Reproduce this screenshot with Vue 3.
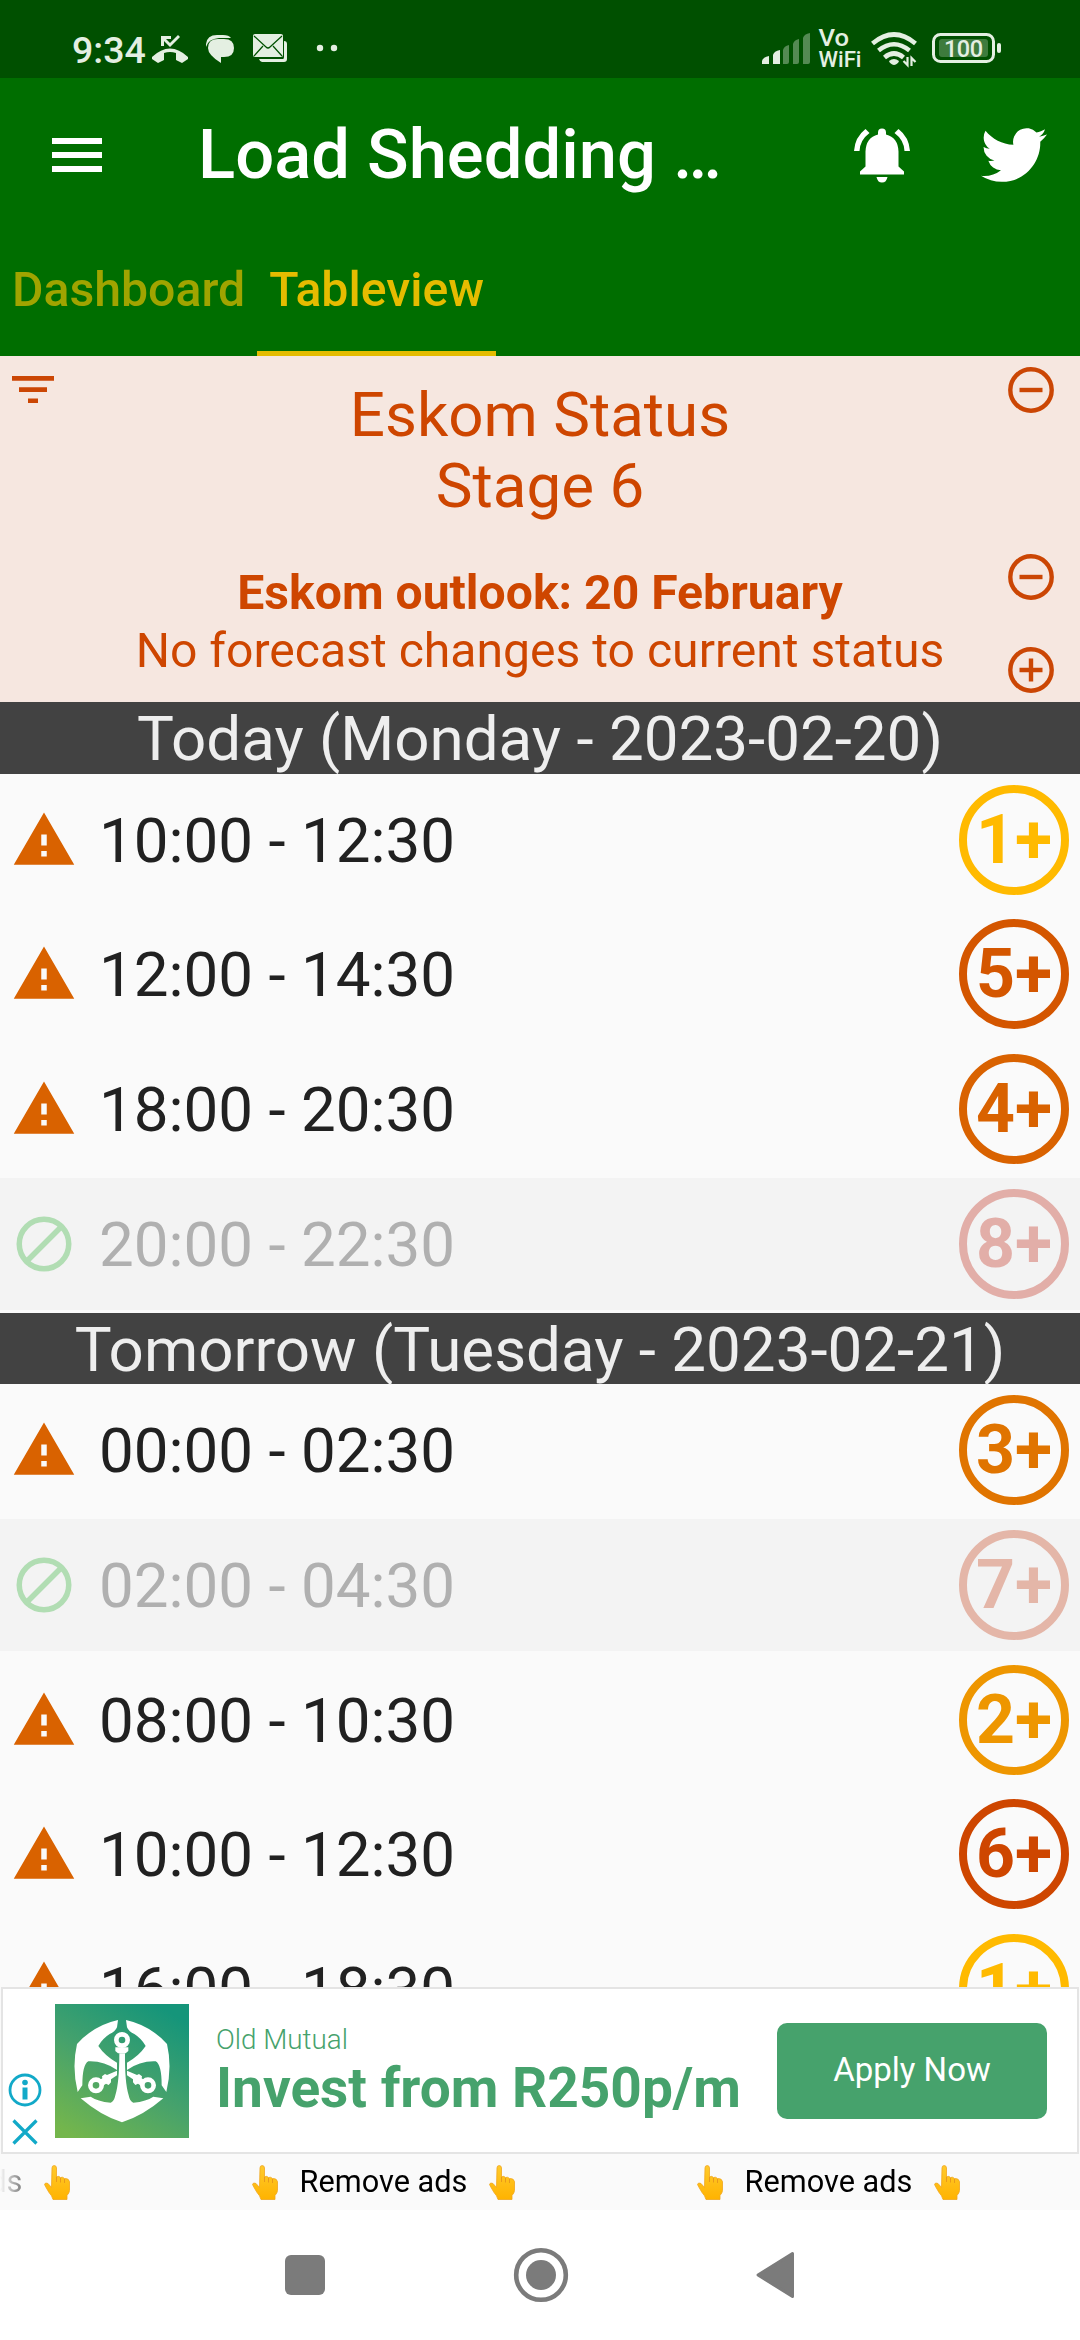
<template>
  <div class="screen">
    <div class="statusbar">
      <span class="clock">9:34</span>
      <svg class="status-left" width="190" height="40" viewBox="150 28 190 40" fill="#e4efe2">
        <path d="M152 57q18-17 36 0v2l-6 4-6-3v-7q-6-2-12 0v7l-6 3-6-4z" />
        <path d="M161 36h10v3h-5l4 4 8-8 2 2-10 10-6-6v5h-3z" />
        <path d="M206 47v-3q1-9 11-9h6q6 0 8 3h-12q-11 1-13 9z" />
        <path d="M218 39h6q10 0 10 9t-10 9h-3v6q-13-8-13-15 0-9 10-9z" />
        <path d="M255 34h26q2 0 2 2v19q0 2-2 2h-26q-2 0-2-2v-19q0-2 2-2z" />
        <path d="M284 41q3 0 3 3v15q0 3-3 3h-22q-2 0-3-3h24q1 0 1-2z" />
        <path d="M254 36l12 11q2 2 4 0l12-11M254 56l9-10M282 56l-9-10" fill="none" stroke="#005000" stroke-width="1.2" />
        <circle cx="320" cy="48" r="3.2" />
        <circle cx="334" cy="48" r="3.2" />
      </svg>
      <span class="spacer"></span>
      <svg class="status-right" width="250" height="50" viewBox="760 23 250 50" fill="#e4efe2">
        <path d="M762 64v-3q1-4 7-5v8zM773 64v-9q1-4 7-5v14z" />
        <path d="M783 64v-14q1-4 6-5v17q0 2-2 2zM793 64v-20q1-4 6-5v23q0 2-2 2zM803 64v-26q1-4 7-5v29q0 2-2 2z" opacity=".37" />
        <text x="818.500" y="46" font-size="23.500" font-weight="500" textLength="30.500" lengthAdjust="spacingAndGlyphs">Vo</text>
        <text x="818.500" y="67" font-size="22" font-weight="500" textLength="43" lengthAdjust="spacingAndGlyphs">WiFi</text>
        <g fill="none" stroke="#e4efe2" stroke-width="4.600">
          <path d="M872.500 43.500q21.500-18 43 0" />
          <path d="M878.500 50.500q15.500-12.500 31 0" />
          <path d="M884.500 57.500q9.500-8 19 0" />
        </g>
        <path d="M889 61q5-4 10 0-1 3-5 4-4-1-5-4z" />
        <path d="M907.500 57v8l-4-4M911.500 66v-8l4 4" fill="none" stroke="#e4efe2" stroke-width="2.200" />
        <rect x="933.500" y="34.500" width="60" height="27" rx="7" fill="none" stroke="#e4efe2" stroke-width="3" />
        <rect x="939" y="39" width="49" height="18" rx="3" opacity=".27" />
        <rect x="997" y="43" width="4" height="10" rx="2" />
        <text x="944" y="57" font-size="23.500" font-weight="500" textLength="39">100</text>
      </svg>
    </div>

    <header class="appbar">
      <svg class="menu" width="50" height="34" viewBox="0 0 50 34" fill="#fff">
        <path d="M0 0h50v6H0zM0 14h50v6H0zM0 28h50v6H0z" />
      </svg>
      <h1>Load Shedding …</h1>
      <svg class="bell" width="56" height="55" viewBox="0 0 56 55" fill="#fff">
        <path d="M28 0.500q4 0 4 4v2q12 3 12.500 17v15l5.500 5v3H6v-3l5.500-5v-15q0.500-14 12.500-17v-2q0-4 4-4z" />
        <path d="M22.500 49h11q-1 5.500-5.500 5.500t-5.500-5.500z" />
        <path d="M11.500 1l4 4Q6 12 5.500 23H0Q1 9 11.500 1zM44.500 1l-4 4Q50 12 50.500 23H56Q55 9 44.500 1z" />
      </svg>
      <svg class="bird" width="66" height="66" viewBox="0 0 24 24" fill="#fff">
        <path d="M23.953 4.570a10 10 0 01-2.825.775 4.958 4.958 0 002.163-2.723c-.951.555-2.005.959-3.127 1.184a4.920 4.920 0 00-8.384 4.482C7.690 8.095 4.067 6.130 1.640 3.162a4.822 4.822 0 00-.666 2.475c0 1.710.870 3.213 2.188 4.096a4.904 4.904 0 01-2.228-.616v.060a4.923 4.923 0 003.946 4.827 4.996 4.996 0 01-2.212.085 4.936 4.936 0 004.604 3.417 9.867 9.867 0 01-6.102 2.105c-.390 0-.779-.023-1.170-.067a13.995 13.995 0 007.557 2.209c9.053 0 13.998-7.496 13.998-13.985 0-.210 0-.420-.015-.630A9.935 9.935 0 0024 4.590z" />
      </svg>
    </header>

    <nav class="tabs">
      <span class="tab">Dashboard</span>
      <span class="tab active">Tableview</span>
    </nav>

    <section class="status">
      <svg class="filter" width="42" height="27" viewBox="0 0 42 27" fill="#cb4604">
        <path d="M0 0h42v4.700H0zM7 11.200h28v4.700H7zM16 22.400h10v4.700H16z" />
      </svg>
      <div class="status-text">
        <p class="stage">Eskom Status<br>Stage 6</p>
        <p class="outlook"><b>Eskom outlook: 20 February</b><br><span>No forecast changes to current status</span></p>
      </div>
      <div class="zoomers">
        <svg v-for="(plus, i) in [false, false, true]" :key="i" width="46" height="46" viewBox="0 0 46 46" fill="none" stroke="#cb4604" stroke-width="4.400">
          <circle cx="23" cy="23" r="20.700" />
          <path :d="plus ? 'M11.500 23h23M23 11.500v23' : 'M11.500 23h23'" />
        </svg>
      </div>
    </section>

    <main class="list">
      <template v-for="day in days" :key="day.title">
        <h2><span>{{ day.title }}</span></h2>
        <div v-for="slot in day.slots" :key="slot.time" class="row" :class="{ off: slot.off }">
          <svg v-if="slot.off" class="icon" viewBox="0 0 24 24" fill="none" stroke="#b1ddb3" stroke-width="2">
            <circle cx="12" cy="12" r="9" />
            <path d="M5 19L19 5" />
          </svg>
          <svg v-else class="icon" viewBox="0 0 24 24" fill="#d96200">
            <path d="M1 21h22L12 2 1 21zm12-3h-2v-2h2v2zm0-4h-2v-4h2v4z" />
          </svg>
          <span class="time"><span>{{ slot.time }}</span></span>
          <span class="badge" :class="'s' + slot.stage">{{ slot.stage }}+</span>
        </div>
      </template>
    </main>

    <aside class="ad">
      <div class="choices">
        <svg width="34" height="34" viewBox="0 0 34 34" fill="#12a9c8">
          <circle cx="17" cy="17" r="15" fill="none" stroke="#12a9c8" stroke-width="2.800" />
          <circle cx="17" cy="9.500" r="2.800" />
          <path d="M14.500 14.500h5v12h-5z" />
        </svg>
        <svg width="26" height="26" viewBox="0 0 26 26" stroke="#12a9c8" stroke-width="3.200">
          <path d="M1.500 1.500l23 23M24.500 1.500l-23 23" />
        </svg>
      </div>
      <svg class="logo" width="134" height="134" viewBox="0 0 402 402">
        <defs>
          <linearGradient id="lg" x1="0.150" y1="1" x2="0.750" y2="0">
            <stop offset="0" stop-color="#74b64c" />
            <stop offset=".5" stop-color="#46a26c" />
            <stop offset="1" stop-color="#15957a" />
          </linearGradient>
        </defs>
        <rect width="402" height="402" fill="url(#lg)" />
        <g fill="#fff">
          <path d="M189 48l-3 22q-6 14-22 20-22 14-34 36 20 30 56 50v22q-40-28-86-26-18 10-18 72l-14 20Q50 190 66 120q50-56 123-72z" />
          <path d="M213 48l3 22q6 14 22 20 22 14 34 36-20 30-56 50v22q40-28 86-26 18 10 18 72l14 20q18-74 2-144-50-56-123-72z" />
          <path d="M193 148h17q-1 88 11 126 4 20 14 22 40-4 60-18l30 5q-60 52-124 72-64-20-124-72l30-5q20 14 60 18 10-2 14-22 12-38 12-126z" />
          <path d="M181 130h39v11l-8 7h-23l-8-7z" />
          <path d="M186 200l-30 13-6-3-9 7 1 6-10 7 12 15 9-6 8 4 7-8v-9l18-12zM216 200l30 13 6-3 9 7-1 6 10 7-12 15-9-6-8 4-7-8v-9l-18-12z" />
        </g>
        <g fill="none" stroke="#fff" stroke-width="14">
          <circle cx="201" cy="108" r="17" />
          <circle cx="123" cy="244" r="17" />
          <circle cx="279" cy="244" r="17" />
        </g>
      </svg>
      <div class="ad-text">
        <span class="brand"><span>Old Mutual</span></span>
        <strong><span>Invest from R250p/m</span></strong>
      </div>
      <button class="apply">Apply Now</button>
    </aside>

    <div class="marquee">
      <div v-for="n in 3" :key="n" class="remove">
        <svg v-for="side in 2" :key="side" :class="'hand' + side" width="26" height="35" viewBox="0 0 26 35">
          <path d="M8 3q0-2.500 2.200-2.500T12.500 3v9q2-1.500 4 .5 2-1 4 1 4-.5 5 3v9q0 2-2.500 5v4H9q-1-4-4-7-3-5-4.500-8 .5-2.500 3.500-1l3.500 4z" fill="url(#hand)" stroke="#f0a61c" stroke-width=".8" />
          <path d="M12.500 12v5M16.500 13v4.500M20.500 14v4" fill="none" stroke="#e9991a" stroke-width="1" />
        </svg>
        <span>Remove ads</span>
      </div>
      <svg width="0" height="0">
        <linearGradient id="hand" x1="0" y1="0" x2="0" y2="1">
          <stop offset="0" stop-color="#ffca2c" />
          <stop offset="1" stop-color="#ffb300" />
        </linearGradient>
      </svg>
    </div>

    <footer class="navbar">
      <svg width="512" height="56" viewBox="283 2247 512 56" fill="#7b7b7b">
        <rect x="284" y="2255" width="40" height="40" rx="6" />
        <circle cx="540" cy="2275" r="24.800" fill="none" stroke="#7b7b7b" stroke-width="4.600" />
        <circle cx="540" cy="2275" r="15" />
        <path d="M757 2275L791.500 2253.500v43z" stroke="#7b7b7b" stroke-width="3" stroke-linejoin="round" />
      </svg>
    </footer>
  </div>
</template>

<script setup>
const days = [
  {
    title: 'Today (Monday - 2023-02-20)',
    slots: [
      { time: '10:00 - 12:30', stage: 1 },
      { time: '12:00 - 14:30', stage: 5 },
      { time: '18:00 - 20:30', stage: 4 },
      { time: '20:00 - 22:30', stage: 8, off: true },
    ],
  },
  {
    title: 'Tomorrow (Tuesday - 2023-02-21)',
    slots: [
      { time: '00:00 - 02:30', stage: 3 },
      { time: '02:00 - 04:30', stage: 7, off: true },
      { time: '08:00 - 10:30', stage: 2 },
      { time: '10:00 - 12:30', stage: 6 },
      { time: '16:00 - 18:30', stage: 1 },
    ],
  },
]
</script>

<style>
body {
  margin: 0;
  background: #fff;
}
</style>

<style scoped>
.screen {
  width: 1080px;
  height: 2340px;
  display: flex;
  flex-direction: column;
  overflow: hidden;
  background: #fafafa;
  font-family: Roboto, sans-serif;
  white-space: nowrap;
}

h1,
h2,
p {
  margin: 0;
  font-weight: 400;
}

svg {
  display: block;
  flex: none;
}

.statusbar {
  flex: none;
  height: 78px;
  box-sizing: border-box;
  padding: 18px 70px 0 72px;
  display: flex;
  align-items: center;
  background: #005000;
  color: #e4efe2;
}

.clock {
  width: 78px;
  padding-top: 4px;
  font-size: 37.500px;
  font-weight: 500;
  line-height: 40px;
}

.spacer {
  flex: 1;
}

.appbar {
  flex: none;
  height: 154px;
  box-sizing: border-box;
  padding: 0 33px 0 52px;
  display: flex;
  align-items: center;
  background: #006e00;
  color: #fff;
}

h1 {
  flex: 1;
  margin: -1px 0 0 96px;
  font-size: 68.750px;
  font-weight: 500;
}

.bell {
  margin-right: 71px;
}

.tabs {
  flex: none;
  height: 123.500px;
  display: flex;
  background: #006e00;
}

.tab {
  box-sizing: border-box;
  height: 123.500px;
  padding: 0 12px;
  border-bottom: 5px solid transparent;
  font-size: 48.200px;
  font-weight: 500;
  line-height: 115px;
  color: #a0a400;
}

.tab.active {
  border-color: #e5bc00;
  color: #e5bc00;
}

.status {
  flex: none;
  height: 346.500px;
  box-sizing: border-box;
  display: flex;
  justify-content: space-between;
  padding: 11px 26px 0 12px;
  background: #f6e7e0;
  color: #ce4600;
  text-align: center;
}

.filter {
  margin: 9px 18px 0 0;
}

.stage {
  padding-top: 13px;
  font-size: 61.900px;
  line-height: 71px;
}

.outlook {
  padding-top: 42px;
  font-size: 48.100px;
  line-height: 58px;
}

.zoomers svg:nth-child(2) {
  margin: 141px 0 47px;
}

.list {
  flex: none;
  height: 1285px;
  overflow: hidden;
}

h2 {
  height: 71.500px;
  background: #424242;
  color: #eee;
  font-size: 61.900px;
  line-height: 74px;
  text-align: center;
}

.row {
  height: 132px;
  margin-bottom: 2.750px;
  box-sizing: border-box;
  padding: 0 11px;
  display: flex;
  align-items: center;
  color: #212121;
}

.row.off {
  background: #f3f3f3;
  color: #b0b0b0;
}

.icon {
  width: 66px;
  height: 66px;
}

.time {
  flex: 1;
  margin-left: 22px;
  padding-top: 2px;
  font-size: 61.900px;
}

.badge {
  width: 110px;
  height: 110px;
  box-sizing: border-box;
  border: 8px solid;
  border-radius: 50%;
  font-size: 68px;
  font-weight: 700;
  line-height: 94px;
  text-align: center;
}

.s1 { color: #ffba00; }
.s2 { color: #ee9600; }
.s3 { color: #e07400; }
.s4 { color: #d96200; }
.s5 { color: #d45600; }
.s6 { color: #ce4600; }
.s7 { color: #e4b6a8; }
.s8 { color: #e2aea8; }

.ad {
  flex: none;
  height: 167px;
  box-sizing: border-box;
  margin: 0 1px;
  padding-right: 30px;
  display: flex;
  align-items: center;
  border: 2px solid #e4e4e4;
  background: #fff;
  color: #46a26c;
}

.choices {
  width: 52px;
  display: flex;
  flex-direction: column;
  gap: 12px;
  padding: 76px 0 0 5px;
  box-sizing: border-box;
}

.choices svg:last-child {
  margin-left: 4px;
}

.ad-text {
  flex: 1;
  margin-left: 27px;
  display: flex;
  flex-direction: column;
}

.brand {
  font-size: 27.800px;
  font-weight: 300;
  line-height: 34px;
}

.ad-text strong {
  font-size: 55px;
  line-height: 62px;
}

.apply {
  width: 270px;
  height: 96px;
  padding-bottom: 3px;
  border: 0;
  border-radius: 10px;
  background: #46a26c;
  color: #fff;
  font-family: inherit;
  font-size: 33px;
}

.marquee {
  flex: none;
  height: 56px;
  display: flex;
  align-items: center;
  gap: 182px;
  overflow: hidden;
  color: #000;
  mask-image: linear-gradient(to right, transparent, #000 44px);
}

.remove {
  width: 263px;
  flex: none;
  display: flex;
  align-items: center;
  justify-content: space-between;
  font-size: 30.700px;
}

.remove:first-child {
  margin-left: -193px;
}

.remove span {
  order: 1;
  margin-top: -2px;
}

.hand2 {
  order: 2;
}

.navbar {
  flex: 1;
  display: flex;
  align-items: center;
  justify-content: center;
  background: #fff;
}
</style>
